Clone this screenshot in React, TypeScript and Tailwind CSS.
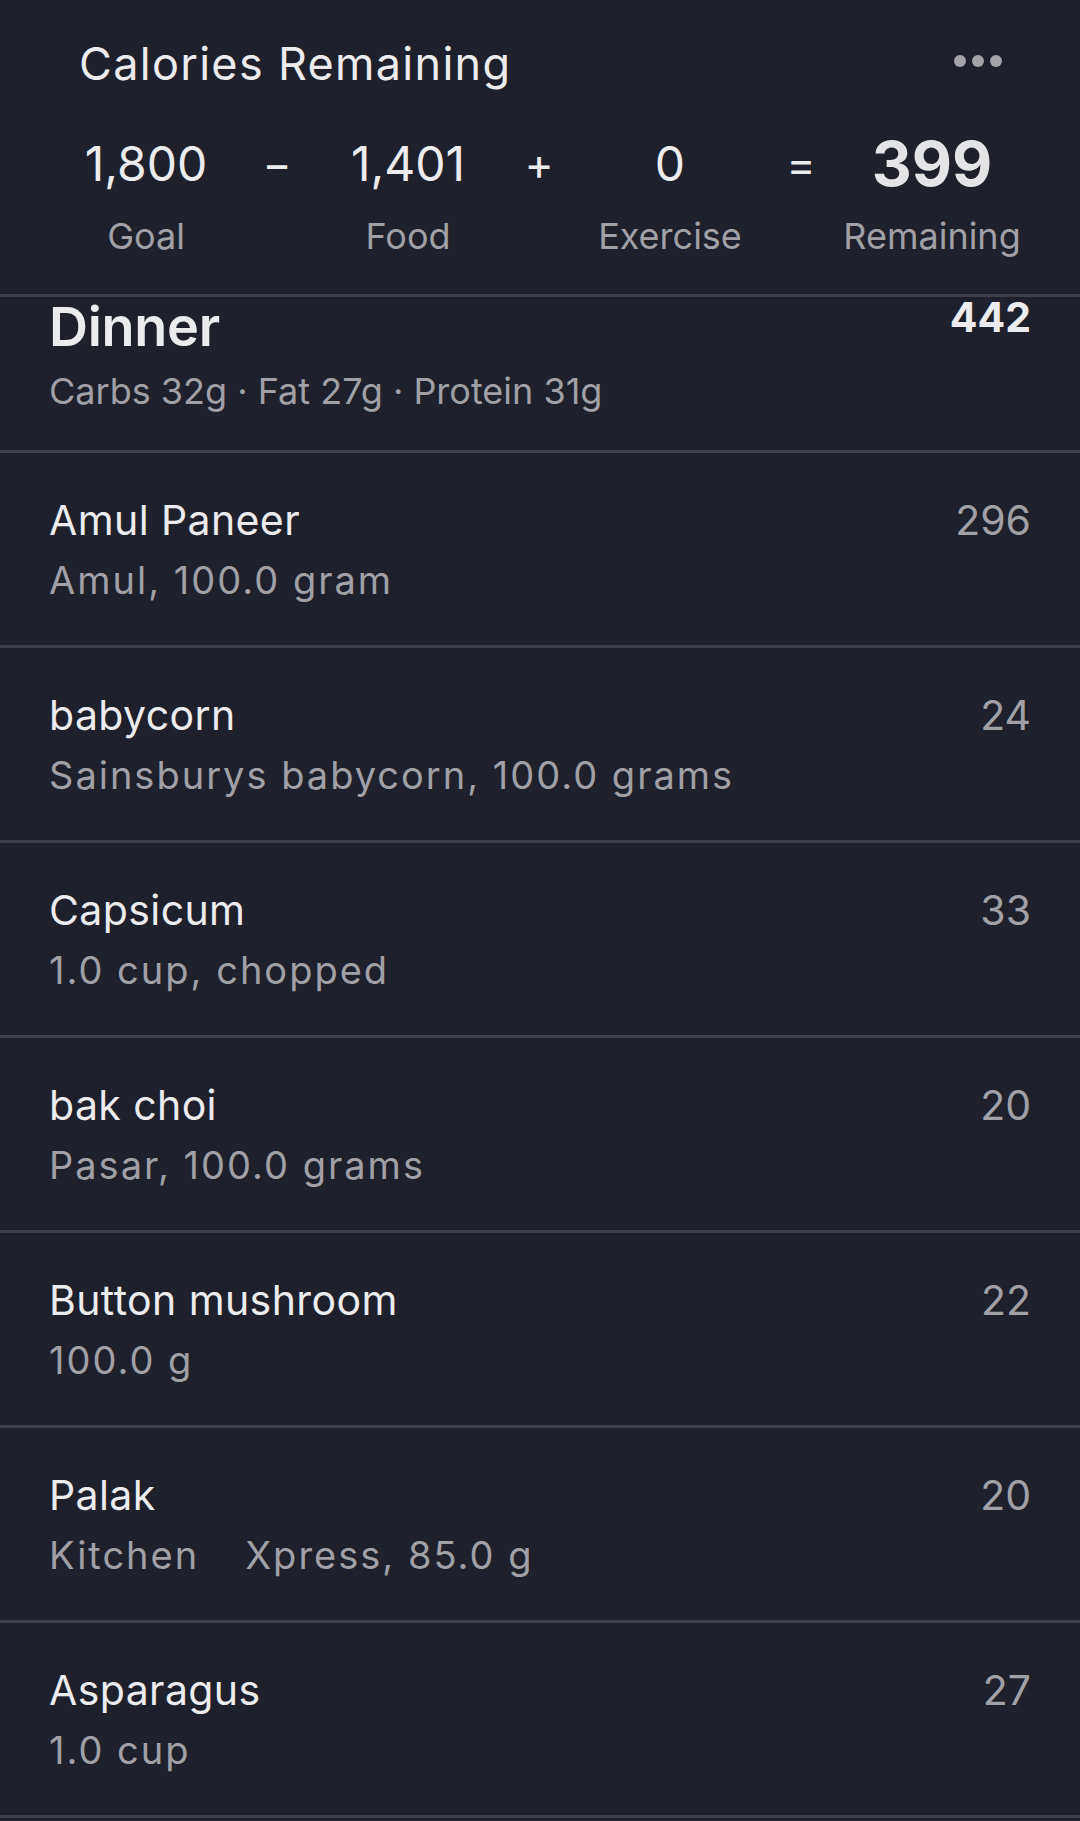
const items = [
  { name: 'Amul Paneer', detail: 'Amul, 100.0 gram', cal: 296 },
  { name: 'babycorn', detail: 'Sainsburys babycorn, 100.0 grams', cal: 24 },
  { name: 'Capsicum', detail: '1.0 cup, chopped', cal: 33 },
  { name: 'bak choi', detail: 'Pasar, 100.0 grams', cal: 20 },
  { name: 'Button mushroom', detail: '100.0 g', cal: 22 },
  { name: 'Palak', detail: 'Kitchen|Xpress, 85.0 g', cal: 20 },
  { name: 'Asparagus', detail: '1.0 cup', cal: 27 },
];

const summary = [
  { value: '1,800', label: 'Goal' },
  { value: '1,401', label: 'Food' },
  { value: '0', label: 'Exercise' },
  { value: '399', label: 'Remaining', bold: true },
];

const ops = ['−', '+', '='];

function Detail({ text }: { text: string }) {
  if (!text.includes('|')) return <>{text}</>;
  const [a, b] = text.split('|');
  return (
    <>
      {a}
      <span className="inline-block w-[46px]" />
      {b}
    </>
  );
}

export default function App() {
  return (
    <div
      className="min-h-[1821px] w-[1080px] bg-[#1e202b] text-[#ececee]"
      style={{ fontFamily: 'Inter, "Noto Sans", sans-serif' }}
    >
      {/* header */}
      <div className="h-[294px] border-b-[3px] border-[#3c3f4a] box-content">
        <div className="flex items-start justify-between pl-[79px] pr-[78px] pt-[36px]">
          <h1 className="text-[45px] leading-[56px] tracking-[1.3px]">Calories Remaining</h1>
          <div className="mt-[19px] flex gap-[6px]">
            <span className="h-[12px] w-[12px] rounded-full bg-[#a3a3a8]" />
            <span className="h-[12px] w-[12px] rounded-full bg-[#a3a3a8]" />
            <span className="h-[12px] w-[12px] rounded-full bg-[#a3a3a8]" />
          </div>
        </div>
        <div className="mt-[43px] grid grid-cols-[1fr_40px_1fr_40px_1fr_40px_1fr] pl-[35px] pr-[37px]">
          {summary.map((s, i) => (
            <div key={s.label} className="contents">
              <div className="flex flex-col items-center">
                <div
                  className={
                    s.bold
                      ? 'text-[62px] font-bold leading-[58px] text-[#e4e4e6]'
                      : 'text-[48px] leading-[58px]'
                  }
                >
                  {s.value}
                </div>
                <div className="mt-[21px] text-[36px] leading-[44px] text-[#a0a0a6]">{s.label}</div>
              </div>
              {i < 3 && (
                <div className="flex justify-center text-[44px] leading-[58px]">{ops[i]}</div>
              )}
            </div>
          ))}
        </div>
      </div>

      {/* dinner header */}
      <div className="border-b-[3px] border-[#3c3f4a] px-[49px] pb-[37px] h-[156px]">
        <div className="flex items-start justify-between">
          <div className="text-[54px] font-semibold leading-[60px] tracking-[-0.3px]">Dinner</div>
          <div className="text-[41px] font-bold leading-[40px]">442</div>
        </div>
        <div className="mt-[12px] text-[36px] leading-[44px] text-[#a0a0a6]">
          Carbs 32g · Fat 27g · Protein 31g
        </div>
      </div>

      {items.map((it) => (
        <div
          key={it.name}
          className="h-[195px] border-b-[3px] border-[#3c3f4a] px-[49px] pt-[41px]"
        >
          <div className="flex items-start justify-between">
            <div className="text-[41px] leading-[52px] tracking-[0.4px]">{it.name}</div>
            <div className="text-[41px] leading-[52px] text-[#a0a0a6]">{it.cal}</div>
          </div>
          <div className="mt-[10px] text-[38px] leading-[48px] tracking-[2px] text-[#a0a0a6]">
            <Detail text={it.detail} />
          </div>
        </div>
      ))}
    </div>
  );
}
